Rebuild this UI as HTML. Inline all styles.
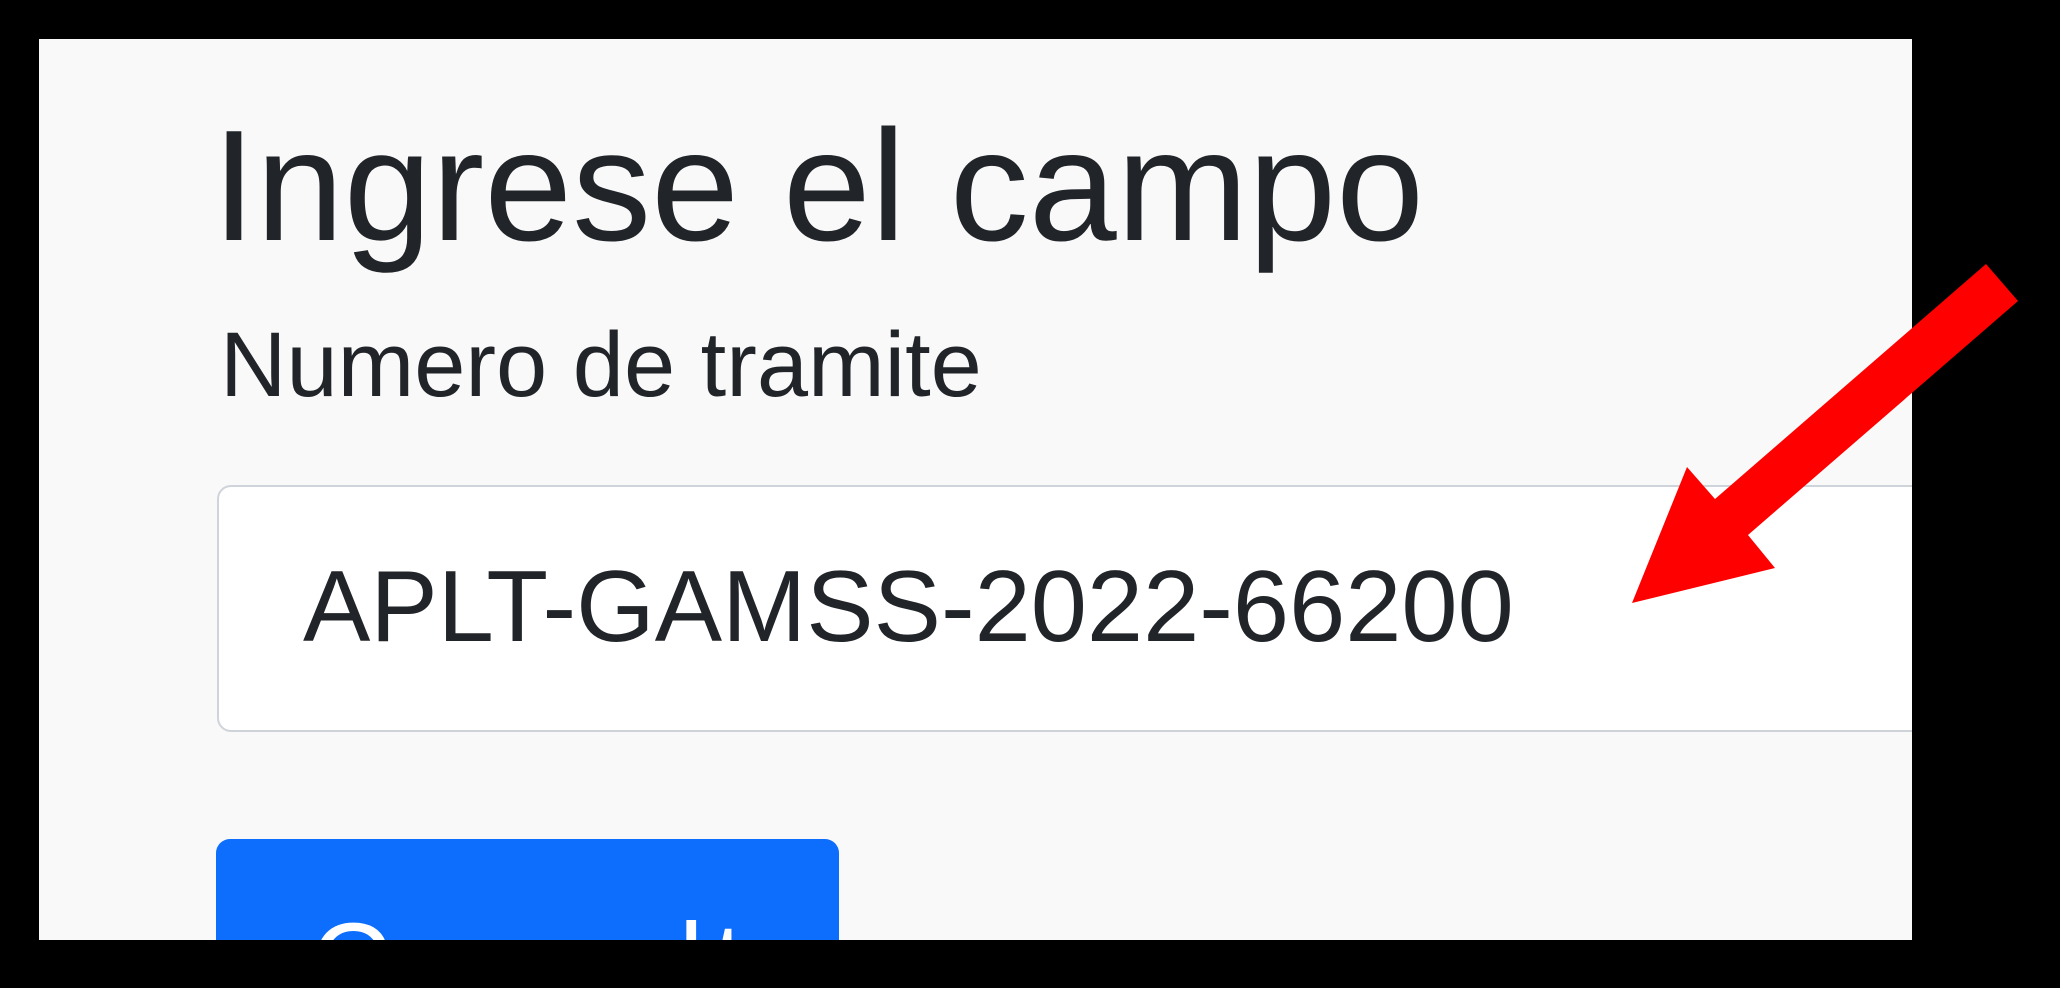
<!DOCTYPE html>
<html><head><meta charset="utf-8"><style>
html,body{margin:0;padding:0;background:#000;width:2060px;height:988px;overflow:hidden;font-family:"Liberation Sans",Arial,sans-serif;}
.panel{position:absolute;left:39px;top:39px;width:1873px;height:901px;background:#f9f9f9;overflow:hidden;}
.h{position:absolute;left:173px;top:68px;font-size:158px;line-height:1;color:#212529;white-space:nowrap;}
.lab{position:absolute;left:181px;top:280px;font-size:92px;line-height:1;color:#212529;white-space:nowrap;}
.inp{position:absolute;left:178px;top:446px;width:1800px;height:247px;background:#fff;border:2px solid #ced4da;border-radius:14px;box-sizing:border-box;}
.inp span{position:absolute;left:84px;top:70px;font-size:101px;line-height:1;color:#212529;white-space:nowrap;}
.btn{position:absolute;left:177px;top:800px;width:623px;height:200px;background:#0d6efd;border-radius:14px;}
.btn span{position:absolute;left:95px;top:69px;font-size:110px;letter-spacing:10px;line-height:1;color:#fff;white-space:nowrap;}
svg{position:absolute;left:0;top:0;}
</style></head><body>
<div class="panel">
<div class="h">Ingrese el campo</div>
<div class="lab">Numero de tramite</div>
<div class="inp"><span>APLT-GAMSS-2022-66200</span></div>
<div class="btn"><span>Consultar</span></div>
</div>
<svg width="2060" height="988"><polygon fill="#ff0000" points="1986,264 2018,301 1748,535 1775,568 1632,603 1687,467 1715,499"/></svg>
</body></html>
